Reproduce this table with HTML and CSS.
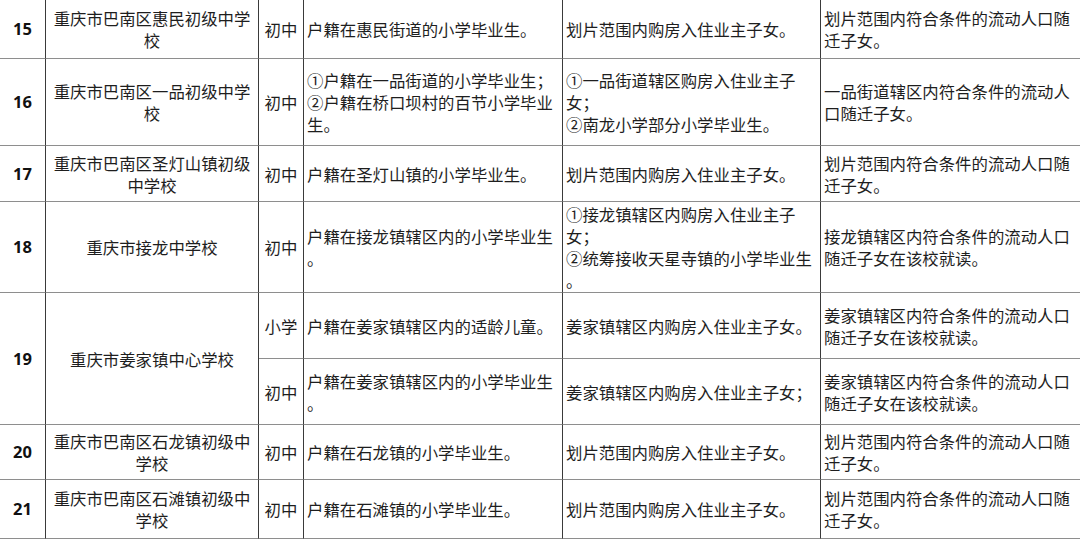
FILE: index.html
```html
<!DOCTYPE html>
<html lang="zh-CN">
<head>
<meta charset="utf-8">
<title>招生范围</title>
<link rel="stylesheet" href="styles.css">
</head>
<body>
<table class="grid">
  <colgroup>
    <col class="c-no">
    <col class="c-name">
    <col class="c-lvl">
    <col class="c-hukou">
    <col class="c-buy">
    <col class="c-flow">
  </colgroup>
  <tbody>
    <tr class="r59">
      <td class="no">15</td>
      <td class="name">重庆市巴南区惠民初级中学<br>校</td>
      <td class="lvl">初中</td>
      <td class="txt">户籍在惠民街道的小学毕业生。</td>
      <td class="txt">划片范围内购房入住业主子女。</td>
      <td class="txt">划片范围内符合条件的流动人口随<br>迁子女。</td>
    </tr>
    <tr class="r87">
      <td class="no">16</td>
      <td class="name">重庆市巴南区一品初级中学<br>校</td>
      <td class="lvl">初中</td>
      <td class="txt">①户籍在一品街道的小学毕业生；<br>②户籍在桥口坝村的百节小学毕业<br>生。</td>
      <td class="txt">①一品街道辖区购房入住业主子<br>女；<br>②南龙小学部分小学毕业生。</td>
      <td class="txt">一品街道辖区内符合条件的流动人<br>口随迁子女。</td>
    </tr>
    <tr class="r56">
      <td class="no">17</td>
      <td class="name">重庆市巴南区圣灯山镇初级<br>中学校</td>
      <td class="lvl">初中</td>
      <td class="txt">户籍在圣灯山镇的小学毕业生。</td>
      <td class="txt">划片范围内购房入住业主子女。</td>
      <td class="txt">划片范围内符合条件的流动人口随<br>迁子女。</td>
    </tr>
    <tr class="r91">
      <td class="no">18</td>
      <td class="name">重庆市接龙中学校</td>
      <td class="lvl">初中</td>
      <td class="txt">户籍在接龙镇辖区内的小学毕业生<br>。</td>
      <td class="txt">①接龙镇辖区内购房入住业主子<br>女；<br>②统筹接收天星寺镇的小学毕业生<br>。</td>
      <td class="txt">接龙镇辖区内符合条件的流动人口<br>随迁子女在该校就读。</td>
    </tr>
    <tr class="r66">
      <td class="no" rowspan="2">19</td>
      <td class="name" rowspan="2">重庆市姜家镇中心学校</td>
      <td class="lvl">小学</td>
      <td class="txt">户籍在姜家镇辖区内的适龄儿童。</td>
      <td class="txt">姜家镇辖区内购房入住业主子女。</td>
      <td class="txt">姜家镇辖区内符合条件的流动人口<br>随迁子女在该校就读。</td>
    </tr>
    <tr class="r66">
      <td class="lvl">初中</td>
      <td class="txt">户籍在姜家镇辖区内的小学毕业生<br>。</td>
      <td class="txt">姜家镇辖区内购房入住业主子女；</td>
      <td class="txt">姜家镇辖区内符合条件的流动人口<br>随迁子女在该校就读。</td>
    </tr>
    <tr class="r55">
      <td class="no">20</td>
      <td class="name">重庆市巴南区石龙镇初级中<br>学校</td>
      <td class="lvl">初中</td>
      <td class="txt">户籍在石龙镇的小学毕业生。</td>
      <td class="txt">划片范围内购房入住业主子女。</td>
      <td class="txt">划片范围内符合条件的流动人口随<br>迁子女。</td>
    </tr>
    <tr class="r59">
      <td class="no">21</td>
      <td class="name">重庆市巴南区石滩镇初级中<br>学校</td>
      <td class="lvl">初中</td>
      <td class="txt">户籍在石滩镇的小学毕业生。</td>
      <td class="txt">划片范围内购房入住业主子女。</td>
      <td class="txt">划片范围内符合条件的流动人口随<br>迁子女。</td>
    </tr>
  </tbody>
</table>
</body>
</html>
```

FILE: styles.css
```css
html, body {
  margin: 0;
  padding: 0;
  background: #ffffff;
  overflow: hidden;
}

.grid {
  border-collapse: separate;
  border-spacing: 0;
  table-layout: fixed;
  width: 1081px;
  font-family: "Noto Sans CJK SC", "Noto Sans", sans-serif;
  font-size: 16.4px;
  line-height: 22px;
  color: #1e1e1e;
}

.c-no { width: 46px; }
.c-name { width: 213px; }
.c-lvl { width: 45px; }
.c-hukou { width: 259px; }
.c-buy { width: 258px; }
.c-flow { width: 260px; }

.grid td {
  box-sizing: border-box;
  padding: 0 3px;
  border-right: 1px solid #3a3a3a;
  border-bottom: 1px solid #8e8e8e;
  vertical-align: middle;
  white-space: nowrap;
  overflow: hidden;
}

.r59 { height: 59px; }
.r87 { height: 87px; }
.r56 { height: 56px; }
.r91 { height: 91px; }
.r66 { height: 66px; }
.r55 { height: 55px; }

.no {
  text-align: center;
  font-family: "Noto Sans", "Open Sans", sans-serif;
  font-weight: 700;
  font-size: 16.5px;
  color: #111111;
}

.name {
  text-align: center;
}

.lvl {
  text-align: center;
  padding: 0;
}

.txt {
  text-align: left;
}
```
